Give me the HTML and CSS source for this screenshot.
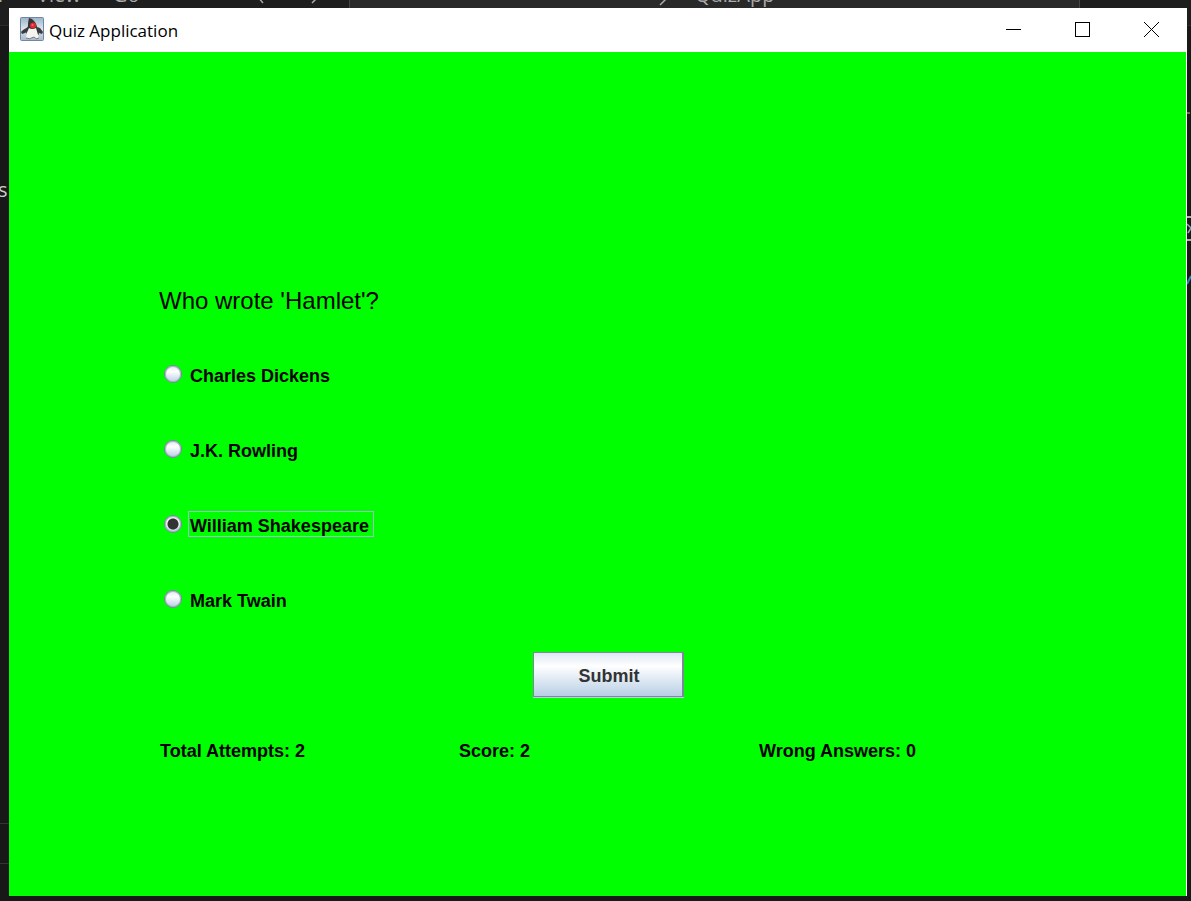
FILE: index.html
```html
<!DOCTYPE html>
<html lang="en">
<head>
<meta charset="utf-8">
<title>Quiz Application</title>
<link rel="stylesheet" href="styles.css">
</head>
<body>
<div class="editor" aria-hidden="true">
  <div class="editor-bar">
    <span class="menu-item menu-run">r</span>
    <span class="menu-item menu-view">View</span>
    <span class="menu-item menu-go">Go</span>
    <svg class="nav-arrows" width="70" height="8" viewBox="0 0 70 8"><path d="M5 -3L10 3M66 -4L59 3" fill="none" stroke="#aaa" stroke-width="1.5"/></svg>
    <div class="command-box">
      <svg class="search-icon" width="10" height="8" viewBox="0 0 10 8"><path d="M9 -3L1 5" fill="none" stroke="#aaa" stroke-width="1.5"/></svg>
      <span class="menu-item search-name">QuizApp</span>
    </div>
  </div>
  <span class="code-letter">s</span>
  <span class="panel-line line-upper"></span>
  <span class="panel-line line-lower"></span>
  <svg class="edge-code" width="4" height="190" viewBox="0 0 4 190"><path d="M0 13H3" stroke="#6a7542" stroke-width="2"/><path d="M0 117H4M0 140H4" stroke="#b0b0b0" stroke-width="2"/><path d="M0 124L4 128L1 133" fill="none" stroke="#8aaabd" stroke-width="1.5"/><path d="M0 184L4 176" stroke="#238bb5" stroke-width="2"/></svg>
</div>
<main class="window">
  <header class="title-bar">
    <svg class="app-icon" width="24" height="24" viewBox="0 0 24 24" aria-hidden="true">
      <defs><linearGradient id="tile" x2="0" y2="1"><stop stop-color="#9fb3c8"/><stop offset=".5" stop-color="#dce5ed"/><stop offset="1" stop-color="#a6b9cc"/></linearGradient></defs>
      <rect x=".5" y=".5" width="23" height="23" rx="1" fill="url(#tile)" stroke="#6d88a5"/>
      <path d="M8 10L3 13L1 15L2 17L5 16L8 14ZM17 10L20 11L23 15L22 17L19 16L17 15Z" fill="#3c3c3c"/>
      <path d="M9 1L12 2Q16 5 17 10L19 17L17 19L15 13L9 12L7 17L6 16L8 9Q8 4 9 1Z" fill="#33363a"/>
      <path d="M9 11Q12 13 16 11L19 21Q16 23 14 20Q9 23 6 21Q6 16 9 11Z" fill="#f4f4f2"/>
      <path d="M6 21Q9 23 14 20Q16 23 19 21" fill="none" stroke="#777"/>
      <circle cx="13" cy="8.500" r="3" fill="#e02a2a"/>
      <circle cx="12.500" cy="8" r="1" fill="#ff6b61"/>
    </svg>
    <h1 class="title">Quiz Application</h1>
    <div class="controls">
      <button class="control" type="button" aria-label="Minimize"><svg width="16" height="16" viewBox="0 0 16 16"><path d="M0 7.500H15" stroke="#000"/></svg></button>
      <button class="control" type="button" aria-label="Maximize"><svg width="16" height="16" viewBox="0 0 16 16"><rect x=".5" y=".5" width="14" height="14" fill="none" stroke="#000"/></svg></button>
      <button class="control" type="button" aria-label="Close"><svg width="16" height="16" viewBox="0 0 16 16"><path d="M0 0L15 15M15 0L0 15" stroke="#000"/></svg></button>
    </div>
  </header>
  <form class="quiz">
    <fieldset class="question">
      <legend class="prompt">Who wrote 'Hamlet'?</legend>
      <label class="option"><input class="radio" type="radio" name="author"><span class="answer">Charles Dickens</span></label>
      <label class="option"><input class="radio" type="radio" name="author"><span class="answer">J.K. Rowling</span></label>
      <label class="option"><input class="radio" type="radio" name="author" checked><span class="answer">William Shakespeare</span></label>
      <label class="option"><input class="radio" type="radio" name="author"><span class="answer">Mark Twain</span></label>
    </fieldset>
    <button class="submit" type="button">Submit</button>
    <div class="stats">
      <span>Total Attempts: 2</span>
      <span>Score: 2</span>
      <span>Wrong Answers: 0</span>
    </div>
  </form>
</main>
</body>
</html>
```
FILE: styles.css
```css
* {
  box-sizing: border-box;
}

body {
  display: flex;
  min-height: 100vh;
  margin: 0;
  padding: 8px 4px 5px 9px;
  background: #181818;
  font-family: "Liberation Sans", Arial, sans-serif;
}

/* Code editor partly hidden behind the quiz window */
.editor {
  position: absolute;
  inset: 0;
  overflow: hidden;
  color: #aaa;
  font: 20px/24px "Open Sans", sans-serif;
}

.editor-bar {
  height: 26px;
  border-bottom: 1px solid #2b2b2b;
  background: #1e1e1e;
}

.menu-item {
  position: absolute;
  top: -17px;
}

.menu-run { left: -2px; }
.menu-view { left: 37px; }
.menu-go { left: 113px; }

.nav-arrows {
  position: absolute;
  top: 0;
  left: 253px;
}

.command-box {
  position: absolute;
  top: 0;
  left: 349px;
  right: 111px;
  height: 8px;
  border: solid #444;
  border-width: 0 1px;
  background: #292929;
}

.search-icon {
  position: absolute;
  top: 0;
  left: 309px;
}

.search-name { left: 345px; }

.code-letter {
  position: absolute;
  top: 178px;
  left: -2px;
  color: #ccc;
}

.panel-line {
  position: absolute;
  left: 0;
  width: 9px;
  height: 1px;
  background: #333;
}

.line-upper { top: 823px; }
.line-lower { top: 863px; }

.edge-code {
  position: absolute;
  top: 100px;
  right: 0;
}

.window {
  position: relative;
  display: flex;
  flex: 1;
  flex-direction: column;
  border-right: 1px solid #fff;
  background: #0f0;
}

.title-bar {
  display: flex;
  align-items: center;
  height: 44px;
  padding-left: 11px;
  background: #fff;
}

.app-icon {
  margin-bottom: 2px;
}

.title {
  margin: 2px 0 0 5px;
  font: 17px/24px "Open Sans", sans-serif;
}

.controls {
  display: flex;
  margin-left: auto;
}

.control {
  display: flex;
  align-items: center;
  justify-content: center;
  width: 69px;
  height: 44px;
  padding: 0;
  border: 0;
  background: none;
}

.quiz {
  display: flex;
  flex-direction: column;
  padding: 226px 128px 120px 150px;
  color: #000;
  font-size: 18px;
  font-weight: bold;
  line-height: 24px;
}

.question {
  display: flex;
  flex-direction: column;
  gap: 30px;
  min-width: 0;
  margin: 0;
  padding: 0;
  border: 0;
}

.prompt {
  margin-bottom: 30px;
  padding: 0;
  font-size: 24px;
  font-weight: normal;
  line-height: 45px;
}

.option {
  display: flex;
  align-items: center;
  gap: 6px;
  height: 45px;
  padding-left: 5px;
}

.radio {
  width: 18px;
  height: 18px;
  margin: 0 0 4px;
  appearance: none;
  border: 1px solid #7a8a99;
  border-radius: 50%;
  background: linear-gradient(#dde8f3, #fff 35%, #b8cfe5);
  box-shadow: inset 0 0 0 1px #a9b9c9;
}

.radio:checked {
  background: radial-gradient(circle, #333 5px, transparent 6px), linear-gradient(#dde8f3, #fff 35%, #b8cfe5);
}

.answer {
  margin-bottom: 4px;
  padding: 4px 4px 0 1px;
  border: 1px solid transparent;
  line-height: 20px;
}

.radio:checked + .answer {
  border-color: #a3b8cc;
}

.submit {
  align-self: center;
  width: 151px;
  height: 45px;
  margin: 29px 0 31px;
  padding: 2px 0 0 2px;
  border: solid #7a8a99;
  border-width: 1px 2px 1px 1px;
  background: linear-gradient(#dde8f3, #fff 30%, #b8cfe5);
  box-shadow: 0 1px #b8cfe5;
  color: #333;
  font: bold 18px/24px "Liberation Sans", Arial, sans-serif;
}

.stats {
  display: grid;
  grid-template-columns: 299px 300px 1fr;
  align-items: center;
  height: 45px;
  padding-left: 1px;
}
```
